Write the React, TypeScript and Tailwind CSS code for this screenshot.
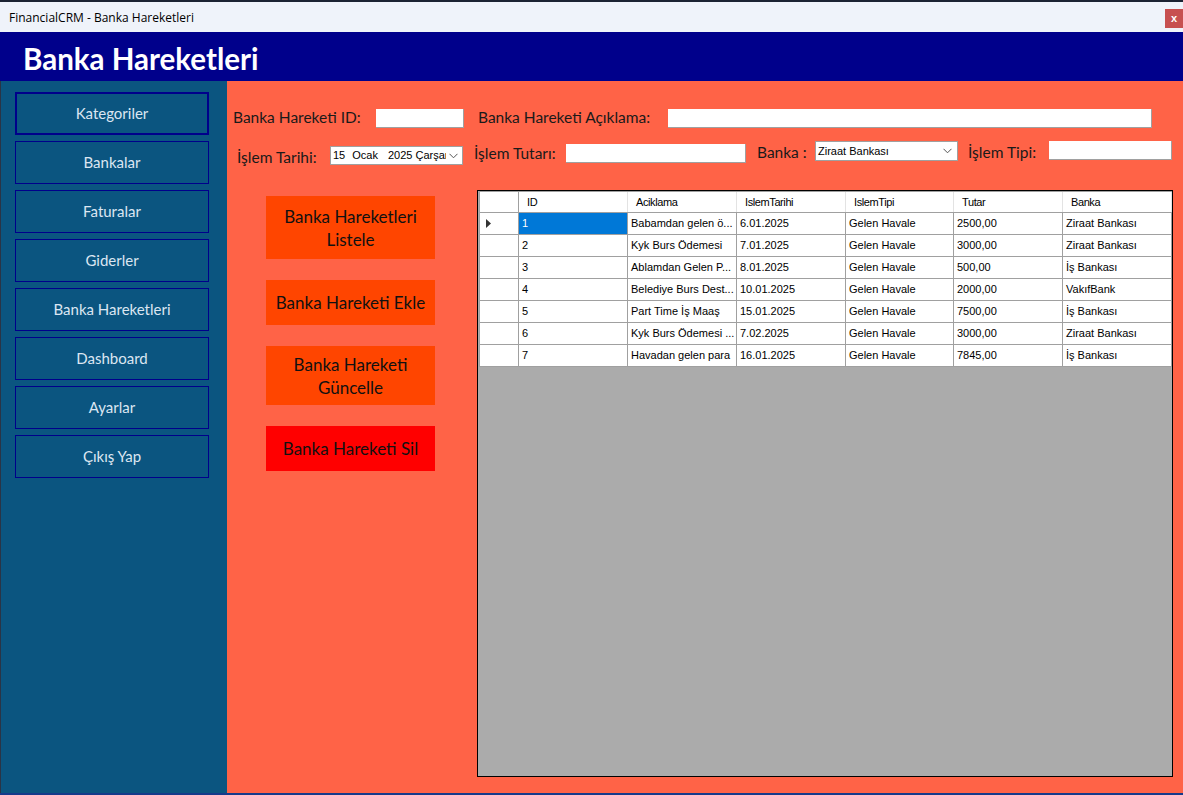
import React from 'react';

const menu = ['Kategoriler', 'Bankalar', 'Faturalar', 'Giderler', 'Banka Hareketleri', 'Dashboard', 'Ayarlar', 'Çıkış Yap'];

const cols = [
  { key: 'ID', w: 'w-[109px]' },
  { key: 'Aciklama', w: 'w-[109px]' },
  { key: 'IslemTarihi', w: 'w-[109px]' },
  { key: 'IslemTipi', w: 'w-[108px]' },
  { key: 'Tutar', w: 'w-[109px]' },
  { key: 'Banka', w: 'w-[109px]' },
];

const rows = [
  ['1', 'Babamdan gelen ö...', '6.01.2025', 'Gelen Havale', '2500,00', 'Ziraat Bankası'],
  ['2', 'Kyk Burs Ödemesi', '7.01.2025', 'Gelen Havale', '3000,00', 'Ziraat Bankası'],
  ['3', 'Ablamdan Gelen P...', '8.01.2025', 'Gelen Havale', '500,00', 'İş Bankası'],
  ['4', 'Belediye Burs Dest...', '10.01.2025', 'Gelen Havale', '2000,00', 'VakıfBank'],
  ['5', 'Part Time İş Maaş', '15.01.2025', 'Gelen Havale', '7500,00', 'İş Bankası'],
  ['6', 'Kyk Burs Ödemesi ...', '7.02.2025', 'Gelen Havale', '3000,00', 'Ziraat Bankası'],
  ['7', 'Havadan gelen para', '16.01.2025', 'Gelen Havale', '7845,00', 'İş Bankası'],
];

const Chevron = () => (
  <svg width="9" height="6" viewBox="0 0 9 6" className="shrink-0">
    <path d="M0.5 0.8 L4.5 4.8 L8.5 0.8" fill="none" stroke="#555" strokeWidth="1" />
  </svg>
);

export default function App() {
  const ui = { fontFamily: 'Lato, "Open Sans", sans-serif' };
  const grid = { fontFamily: '"Liberation Sans", Arial, sans-serif' };

  return (
    <div className="w-[1183px] h-[795px] flex flex-col bg-[#1b2333] overflow-hidden" style={ui}>
      {/* title bar */}
      <div className="mt-[2px] h-[30px] bg-[#eff3fa] flex items-start justify-between">
        <span className="ml-[9px] mt-[7px] text-[12px] text-black" style={{ fontFamily: '"Open Sans", sans-serif' }}>
          FinancialCRM - Banka Hareketleri
        </span>
        <div className="mt-[7px] w-[18px] h-[19px] bg-[#c75050] text-white text-[11px] font-bold flex items-center justify-center" style={grid}>
          x
        </div>
      </div>

      {/* header */}
      <div className="h-[49px] bg-[#00008b] flex items-center pl-[23px]">
        <h1 className="text-[29.5px] font-bold text-white leading-none mt-[4px]">Banka Hareketleri</h1>
      </div>

      <div className="flex h-[712px]">
        {/* sidebar */}
        <div className="w-[227px] bg-[#0b5580] border-l border-[#2a3446] flex flex-col gap-[6px] pt-[11px] pl-[14px]">
          {menu.map((m, i) => (
            <div
              key={m}
              className={`w-[194px] h-[43px] flex items-center justify-center text-[15px] text-[#dce6f2] border-[#00008b] ${
                i === 0 ? 'border-2' : 'border'
              }`}
            >
              {m}
            </div>
          ))}
        </div>

        {/* main */}
        <div className="flex-1 bg-[#ff6347] flex flex-col">
          {/* row 1 */}
          <div className="mt-[27px] h-[20px] flex items-center text-[15.5px] text-[#1a1a1a]">
            <span className="ml-[6px] w-[143px]">Banka Hareketi ID:</span>
            <div className="w-[88px] h-[19px] bg-white border-b border-r border-[#a0a0a0]" />
            <span className="ml-[14px] w-[190px]">Banka Hareketi Açıklama:</span>
            <div className="w-[484px] h-[19px] bg-white border-b border-r border-[#a0a0a0]" />
          </div>

          {/* row 2 */}
          <div className="mt-[13px] h-[25px] flex items-start text-[15.5px] text-[#1a1a1a]">
            <span className="ml-[10px] mt-[5px] w-[93px]">İşlem Tarihi:</span>
            <div className="mt-[5px] w-[133px] h-[19px] bg-white border border-[#a0a0a0] flex items-center pl-[2px] pr-[4px] text-[11px] text-black" style={grid}>
              <div className="flex-1 flex whitespace-nowrap overflow-hidden">
                <span>15</span>
                <span className="ml-[7px]">Ocak</span>
                <span className="ml-[10px]">2025 Çarşamba</span>
              </div>
              <span className="ml-[3px]"><Chevron /></span>
            </div>
            <span className="ml-[11px] mt-[1px] w-[92px]">İşlem Tutarı:</span>
            <div className="mt-[3px] w-[180px] h-[19px] bg-white border-b border-r border-[#a0a0a0]" />
            <span className="ml-[11px] w-[58px]">Banka :</span>
            <div className="w-[143px] h-[20px] bg-white border border-[#a0a0a0] flex items-center pl-[2px] pr-[5px] text-[11px] text-black" style={grid}>
              <span className="flex-1">Ziraat Bankası</span>
              <Chevron />
            </div>
            <span className="ml-[10px] w-[81px]">İşlem Tipi:</span>
            <div className="w-[123px] h-[19px] bg-white border-b border-r border-[#a0a0a0]" />
          </div>

          {/* content */}
          <div className="flex mt-[24px]">
            <div className="ml-[39px] w-[169px] flex flex-col mt-[6px] text-[17px] text-[#111]">
              <button className="h-[63px] bg-[#ff4500] leading-[23px] pt-[1px]">Banka Hareketleri<br />Listele</button>
              <button className="mt-[21px] h-[45px] bg-[#ff4500]">Banka Hareketi Ekle</button>
              <button className="mt-[21px] h-[59px] bg-[#ff4500] leading-[23px]">Banka Hareketi<br />Güncelle</button>
              <button className="mt-[21px] h-[45px] bg-[#ff0000]">Banka Hareketi Sil</button>
            </div>

            <div className="ml-[42px] w-[696px] h-[587px] border border-black bg-[#ababab] flex flex-col items-start" style={grid}>
              <div className="bg-white border-l border-t border-[#a0a0a0] ml-[1px] text-[11px] text-black">
                <div className="flex h-[21px] border-b border-[#a0a0a0]">
                  <div className="w-[39px] border-r border-[#a0a0a0]" />
                  {cols.map((c) => (
                    <div key={c.key} className={`${c.w} border-r border-[#e3e3e3] flex items-center pl-[8px] tracking-[-0.4px]`}>
                      {c.key}
                    </div>
                  ))}
                </div>
                {rows.map((r, ri) => (
                  <div key={ri} className="flex h-[22px] border-b border-[#a0a0a0]">
                    <div className="w-[39px] border-r border-[#a0a0a0] flex items-center pl-[6px]">
                      {ri === 0 && (
                        <svg width="5" height="9" viewBox="0 0 5 9">
                          <path d="M0 0 L5 4.5 L0 9 Z" fill="#333" />
                        </svg>
                      )}
                    </div>
                    {r.map((v, ci) => (
                      <div
                        key={ci}
                        className={`${cols[ci].w} border-r border-[#a0a0a0] flex items-center pl-[3px] whitespace-nowrap overflow-hidden ${
                          ri === 0 && ci === 0 ? 'bg-[#0078d7] text-white' : ''
                        }`}
                      >
                        {v}
                      </div>
                    ))}
                  </div>
                ))}
              </div>
            </div>
          </div>
        </div>
      </div>
      <div className="flex-1 bg-[#163a8a]" />
    </div>
  );
}
